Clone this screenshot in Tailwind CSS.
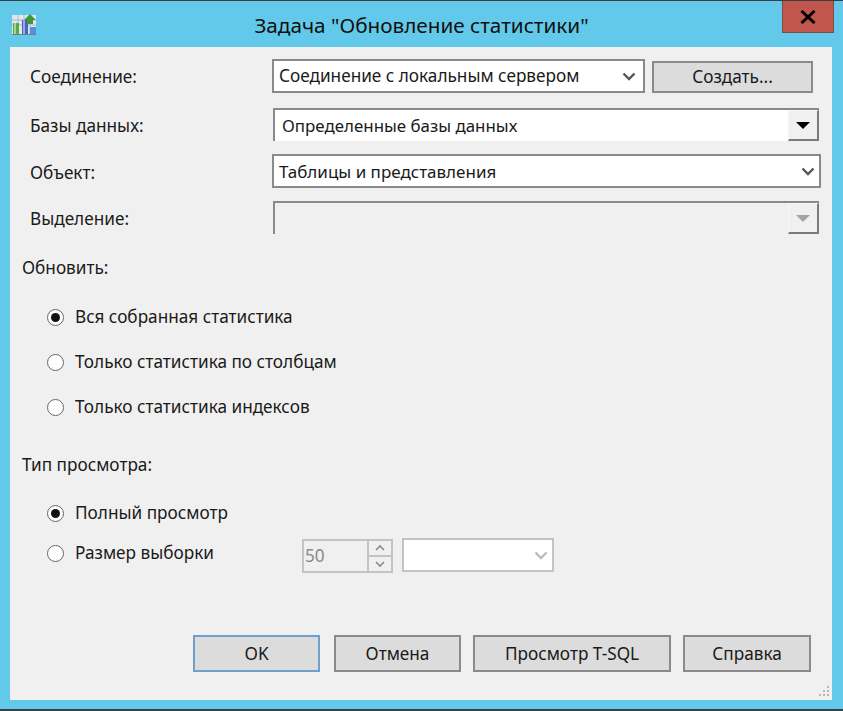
<!DOCTYPE html>
<html lang="ru">
<head>
    <meta charset="UTF-8">
    <title>Задача "Обновление статистики"</title>
    <script src="https://cdn.jsdelivr.net/npm/@tailwindcss/browser@4"></script>
</head>
<body class="w-[843px] h-[711px] overflow-hidden bg-[#63c9ea] font-['Noto_Sans',sans-serif] text-[17.2px] text-[#1a1a1a]">
    <div class="h-full flex flex-col border-t border-b-2 border-[#3a3f44]">
        <!-- title bar -->
        <div class="relative h-[46px] shrink-0 flex items-center justify-center">
            <svg class="absolute left-[12px] top-[13px]" width="24" height="21" viewBox="0 0 24 21">
                <rect x="0" y="1" width="24" height="19" fill="#dfe8ee"/>
                <path d="M0 6h24M0 11h24M6 1v19M12 1v19M18 1v19" stroke="#a9b8c4" stroke-width="1"/>
                <rect x="1" y="9" width="6" height="11" fill="#5aa848"/>
                <rect x="2" y="9" width="2" height="11" fill="#a4d68c"/>
                <rect x="10" y="6" width="6" height="14" fill="#4a63bd"/>
                <rect x="11" y="6" width="2" height="14" fill="#98a8e8"/>
                <rect x="18" y="13" width="6" height="7" fill="#5a8fd8"/>
                <path d="M18 0l6 6h-3v4h-6V6h-3z" fill="#3c9a3a"/>
                <rect x="0" y="20" width="24" height="1" fill="#6f7f8c"/>
            </svg>
            <span class="text-[20.7px] text-[#101010] pt-[3px]">Задача "Обновление статистики"</span>
            <div class="absolute left-[782px] top-0 w-[52px] h-[32px] bg-[#c0564e] border border-t-0 border-[#7d4a46] flex items-center justify-center">
                <svg width="16" height="14" viewBox="0 0 16 14"><path d="M1.5 1l13 12M14.500 1l-13 12" stroke="#000" stroke-width="3"/></svg>
            </div>
        </div>

        <!-- dialog client area -->
        <div class="relative ml-[10px] w-[822px] h-[653px] bg-[#f0f0f0] flex flex-col">
            <div class="pl-[20px] pt-[12px] flex flex-col">
                <div class="flex h-[34px] items-center">
                    <label class="w-[242px] shrink-0 pt-[2px]">Соединение:</label>
                    <div class="w-[373px] h-[34px] bg-white border-2 border-[#8a8a8a] flex items-center justify-between pl-[5px] pr-[7px]">
                        <span>Соединение с локальным сервером</span>
                        <svg width="14" height="9" viewBox="0 0 14 9"><path d="M1.500 1.500L7 7l5.500-5.500" fill="none" stroke="#555" stroke-width="2.400"/></svg>
                    </div>
                    <button class="ml-[7px] mt-[2px] w-[161px] h-[32px] bg-[#dcdcdc] border-2 border-[#8a8a8a]">Создать...</button>
                </div>

                <div class="flex h-[33px] items-center mt-[15px]">
                    <label class="w-[243px] shrink-0 pt-[2px]">Базы данных:</label>
                    <div class="w-[546px] h-[33px] bg-white border-t-2 border-l-2 border-[#8a8a8a] flex items-stretch justify-between relative">
                        <span class="pl-[7px] self-center text-[16.9px]">Определенные базы данных</span>
                        <div class="w-[31px] bg-[#f0f0f0] border-t border-l border-t-[#f8f8f8] border-l-[#f8f8f8] border-r-2 border-b-2 border-r-[#7a7a7a] border-b-[#7a7a7a] flex items-center justify-center">
                            <svg width="14" height="7" viewBox="0 0 14 7"><path d="M0 0h14L7 7z" fill="#000"/></svg>
                        </div>
                    </div>
                </div>

                <div class="flex h-[34px] items-center mt-[13px]">
                    <label class="w-[242px] shrink-0 pt-[4px]">Объект:</label>
                    <div class="w-[549px] h-[34px] bg-white border-2 border-[#8a8a8a] flex items-center justify-between pl-[5px] pr-[4px]">
                        <span class="pt-[2px] text-[17px]">Таблицы и представления</span>
                        <svg width="14" height="9" viewBox="0 0 14 9"><path d="M1.500 1.500L7 7l5.500-5.500" fill="none" stroke="#555" stroke-width="2.400"/></svg>
                    </div>
                </div>

                <div class="flex h-[33px] items-center mt-[13px]">
                    <label class="w-[243px] shrink-0 pt-[2px]">Выделение:</label>
                    <div class="w-[546px] h-[33px] bg-[#f0f0f0] border-t-2 border-l-2 border-[#8a8a8a] flex justify-end">
                        <div class="w-[31px] bg-[#f0f0f0] border-t border-l border-t-[#f8f8f8] border-l-[#f8f8f8] border-r-2 border-b-2 border-r-[#7a7a7a] border-b-[#7a7a7a] flex items-center justify-center">
                            <svg width="14" height="7" viewBox="0 0 14 7"><path d="M0 0h14L7 7z" fill="#a3a3a3"/></svg>
                        </div>
                    </div>
                </div>
            </div>

            <div class="pl-[12px] mt-[22px] h-[24px] leading-[24px]">Обновить:</div>

            <div class="pl-[37px] mt-[25px] flex flex-col gap-[21px]">
                <div class="flex items-center h-[24px] gap-[11px]">
                    <span class="w-[17px] h-[17px] rounded-full bg-white border border-[#666] flex items-center justify-center"><span class="w-[9px] h-[9px] rounded-full bg-[#111]"></span></span>
                    <span>Вся собранная статистика</span>
                </div>
                <div class="flex items-center h-[24px] gap-[11px]">
                    <span class="w-[17px] h-[17px] rounded-full bg-white border border-[#666]"></span>
                    <span>Только статистика по столбцам</span>
                </div>
                <div class="flex items-center h-[24px] gap-[11px]">
                    <span class="w-[17px] h-[17px] rounded-full bg-white border border-[#666]"></span>
                    <span>Только статистика индексов</span>
                </div>
            </div>

            <div class="pl-[12px] mt-[34px] h-[24px] leading-[24px]">Тип просмотра:</div>

            <div class="pl-[37px] mt-[24px] flex flex-col">
                <div class="flex items-center h-[24px] gap-[11px]">
                    <span class="w-[17px] h-[17px] rounded-full bg-white border border-[#666] flex items-center justify-center"><span class="w-[9px] h-[9px] rounded-full bg-[#111]"></span></span>
                    <span>Полный просмотр</span>
                </div>
                <div class="flex items-center h-[34px] mt-[11px]">
                    <span class="w-[17px] h-[17px] rounded-full bg-white border border-[#666]"></span>
                    <span class="ml-[11px] w-[228px]">Размер выборки</span>
                    <div class="ml-[-1px] w-[91px] h-[34px] mt-[6px] border-2 border-[#c0c4c6] flex justify-between text-[#8a8a8a]">
                        <span class="pl-[1px] leading-[29px]">50</span>
                        <div class="w-[24px] flex flex-col bg-[#c0c4c6] gap-[2px] border-l-2 border-[#c0c4c6]">
                            <div class="flex-1 bg-[#f0f0f0] flex items-center justify-center">
                                <svg width="10" height="6" viewBox="0 0 10 6"><path d="M1 5l4-4 4 4" fill="none" stroke="#888" stroke-width="1.600"/></svg>
                            </div>
                            <div class="flex-1 bg-[#f0f0f0] flex items-center justify-center">
                                <svg width="10" height="6" viewBox="0 0 10 6"><path d="M1 1l4 4 4-4" fill="none" stroke="#888" stroke-width="1.600"/></svg>
                            </div>
                        </div>
                    </div>
                    <div class="ml-[9px] w-[152px] h-[34px] mt-[4px] bg-white border-2 border-[#c0c4c6] flex items-center justify-end pr-[4px]">
                        <svg width="14" height="9" viewBox="0 0 14 9"><path d="M1.500 1.500L7 7l5.500-5.500" fill="none" stroke="#bbb" stroke-width="2.400"/></svg>
                    </div>
                </div>
            </div>

            <!-- bottom buttons -->
            <div class="flex pl-[183px] mt-[65px]">
                <button class="w-[127px] h-[37px] bg-[#dcdcdc] border-2 border-[#6f9fcb]">OK</button>
                <button class="ml-[14px] w-[127px] h-[37px] bg-[#dcdcdc] border-2 border-[#8a8a8a]">Отмена</button>
                <button class="ml-[12px] w-[198px] h-[37px] bg-[#dcdcdc] border-2 border-[#8a8a8a]">Просмотр T-SQL</button>
                <button class="ml-[12px] w-[128px] h-[37px] bg-[#dcdcdc] border-2 border-[#8a8a8a]">Справка</button>
            </div>

            <!-- size grip -->
            <svg class="absolute right-[2px] bottom-[2px]" width="12" height="12" viewBox="0 0 12 12" fill="#b5b5b5">
                <rect x="9" y="0" width="2" height="2"/><rect x="5" y="4" width="2" height="2"/><rect x="9" y="4" width="2" height="2"/>
                <rect x="1" y="8" width="2" height="2"/><rect x="5" y="8" width="2" height="2"/><rect x="9" y="8" width="2" height="2"/>
            </svg>
        </div>
    </div>
</body>
</html>
